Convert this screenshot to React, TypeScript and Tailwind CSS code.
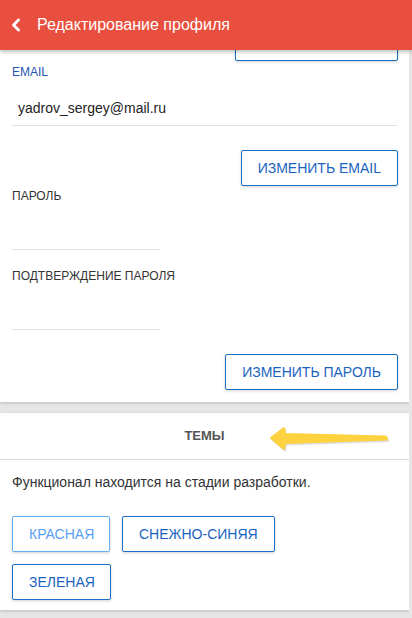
import { ChevronLeft } from "lucide-react";

const btn =
  "h-[36px] px-4 border rounded-[2px] bg-white text-[14px] uppercase shadow-[0_1px_3px_rgba(0,0,0,0.18)] whitespace-nowrap";
const btnBlue = `${btn} border-[#1a6fc9] text-[#1a64c0]`;

const Arrow = () => (
  <svg
    width="124"
    height="28"
    viewBox="0 0 124 28"
    className="absolute left-[268px] top-[12px]"
  >
    <path
      d="M3 13 L16 3 L17 9 L118 11.5 L119 14.5 L17 18 L16 24 Z"
      fill="#c9c9c9"
      opacity="0.6"
      transform="translate(1 1.5)"
      stroke="#c9c9c9"
      strokeWidth="2"
      strokeLinejoin="round"
    />
    <path
      d="M3 13 L16 3 L17 9 L118 11.5 L119 14.5 L17 18 L16 24 Z"
      fill="#fdd23e"
      stroke="#fdd23e"
      strokeWidth="2"
      strokeLinejoin="round"
    />
  </svg>
);

const Label = ({ text, blue }: { text: string; blue?: boolean }) => (
  <div
    className={`px-3 text-[12px] leading-4 ${blue ? "text-[#1f56b3]" : "text-[#333]"}`}
  >
    {text}
  </div>
);

export default function App() {
  return (
    <div
      className="w-[412px] h-[618px] overflow-hidden bg-[#e6e6e6] flex flex-col"
      style={{ fontFamily: '"Liberation Sans", Arial, sans-serif' }}
    >
      <header className="relative z-10 h-[50px] shrink-0 bg-[#e94f3e] flex items-center shadow-[0_2px_4px_rgba(0,0,0,0.25)]">
        <ChevronLeft size={20} strokeWidth={3.5} className="text-white ml-[6px]" />
        <h1 className="ml-[11px] text-white text-[16px] font-medium">
          Редактирование профиля
        </h1>
      </header>

      <div className="flex-1 overflow-hidden w-[409px]">
        <section className="bg-white shadow-[0_1px_3px_rgba(0,0,0,0.2)] pb-[12px]">
          {/* save button, scrolled under the header */}
          <div className="flex justify-end pr-[11px]">
            <div className="h-[36px] w-[163px] -mt-[25px] border border-[#1a6fc9] rounded-[2px] bg-white shadow-[0_1px_3px_rgba(0,0,0,0.18)]" />
          </div>

          <div className="mt-[3px]">
            <Label text="EMAIL" blue />
            <div className="mx-3 h-[46px] pt-[11px] pl-[6px] flex items-center border-b border-[#e2e2e2] text-[14px] text-[#222]">
              yadrov_sergey@mail.ru
            </div>
          </div>

          <div className="flex justify-end pr-[11px] mt-[24px]">
            <button className={btnBlue}>Изменить email</button>
          </div>

          <div className="mt-[2px]">
            <Label text="ПАРОЛЬ" />
            <div className="ml-3 w-[148px] h-[46px] border-b border-[#e2e2e2]" />
          </div>

          <div className="mt-[18px]">
            <Label text="ПОДТВЕРЖДЕНИЕ ПАРОЛЯ" />
            <div className="ml-3 w-[148px] h-[46px] border-b border-[#e2e2e2]" />
          </div>

          <div className="flex justify-end pr-[11px] mt-[24px]">
            <button className={btnBlue}>Изменить пароль</button>
          </div>
        </section>

        <section className="mt-[11px] bg-white shadow-[0_1px_3px_rgba(0,0,0,0.2)] pb-[10px]">
          <div className="relative h-[47px] flex items-center justify-center border-b border-[#dcdcdc]">
            <span className="text-[13px] font-bold text-[#555]">ТЕМЫ</span>
            <Arrow />
          </div>
          <p className="px-3 mt-[12px] text-[14px] leading-5 text-[#333]">
            Функционал находится на стадии разработки.
          </p>
          <div className="px-3 mt-[24px] flex flex-col gap-y-3">
            <div className="flex gap-x-3">
              <button className={`${btn} w-[98px] border-[#64aef5] text-[#5a9ff0]`}>
                Красная
              </button>
              <button className={btnBlue}>Снежно-синяя</button>
            </div>
            <div className="flex">
              <button className={`${btnBlue} w-[99px]`}>Зеленая</button>
            </div>
          </div>
        </section>
      </div>
    </div>
  );
}
